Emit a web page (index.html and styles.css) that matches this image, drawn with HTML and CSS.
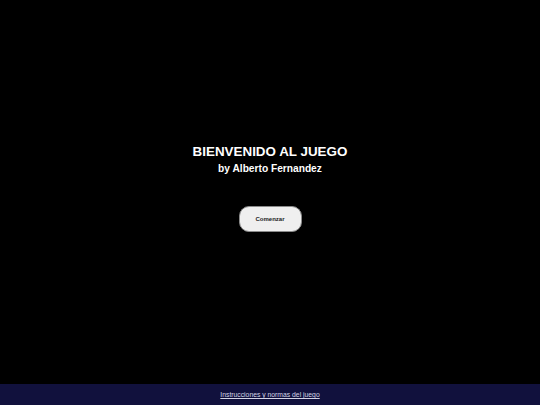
FILE: index.html
```html
<!DOCTYPE html>
<html lang="es">
<head>
<meta charset="utf-8">
<link rel="stylesheet" href="styles.css">
</head>
<body>
<div class="page">
  <main class="main">
    <h1 class="title">BIENVENIDO AL JUEGO</h1>
    <p class="author">by Alberto Fernandez</p>
    <button class="start">Comenzar</button>
  </main>
  <footer class="footer">
    <a class="rules" href="#">Instrucciones y normas del juego</a>
  </footer>
</div>
</body>
</html>
```
FILE: styles.css
```css
html, body {
  margin: 0;
  padding: 0;
  background: #000;
}
.page {
  width: 540px;
  height: 405px;
  display: flex;
  flex-direction: column;
  font-family: "Liberation Sans", Arial, sans-serif;
}
.main {
  flex: 1;
  display: flex;
  flex-direction: column;
  align-items: center;
  justify-content: center;
  padding-bottom: 8px;
  color: #fff;
}
.title {
  margin: 0;
  font-size: 13.4px;
  font-weight: bold;
  line-height: 16px;
}
.author {
  margin: 2.5px 0 0;
  font-size: 10.2px;
  font-weight: bold;
  line-height: 12px;
}
.start {
  margin-top: 31px;
  width: 63px;
  height: 26px;
  border-radius: 10px;
  border: 1px solid #8a8a8a;
  background: #efefef;
  color: #222;
  font-family: "Liberation Sans", Arial, sans-serif;
  font-size: 6px;
  font-weight: bold;
  padding: 0;
}
.footer {
  height: 21px;
  background: #11113d;
  display: flex;
  align-items: center;
  justify-content: center;
}
.rules {
  color: #d4d4e6;
  font-size: 6.8px;
  text-decoration: underline;
}
```
